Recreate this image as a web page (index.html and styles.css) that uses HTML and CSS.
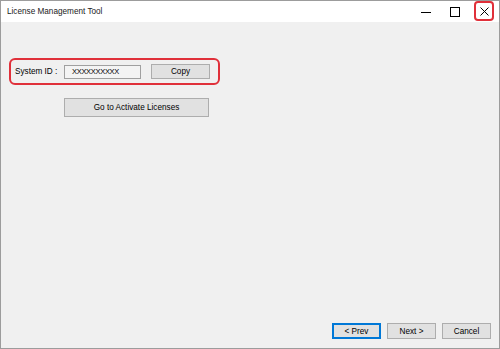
FILE: index.html
```html
<!DOCTYPE html>
<html lang="en">
<head>
    <meta charset="UTF-8">
    <title>License Management Tool</title>
    <link rel="stylesheet" href="styles.css">
</head>
<body>
    <div class="window">
        <div class="titlebar">
            <span class="title">License Management Tool</span>
            <div class="controls">
                <span class="ctl"><svg width="10" height="10" viewBox="0 0 10 10"><path d="M0 5.5h10" stroke="#000" stroke-width="1"/></svg></span>
                <span class="ctl"><svg width="10" height="10" viewBox="0 0 10 10"><rect x="0.5" y="0.5" width="9" height="9" fill="none" stroke="#000" stroke-width="1"/></svg></span>
                <span class="ctl close"><svg width="9" height="9" viewBox="0 0 9 9"><path d="M0.5 0.5L8.5 8.5M8.5 0.5L0.5 8.5" stroke="#000" stroke-width="1"/></svg></span>
            </div>
        </div>

        <div class="content">
            <div class="id-row">
                <span class="label">System ID :</span>
                <span class="idbox">XXXXXXXXXX</span>
                <button class="btn copy">Copy</button>
            </div>

            <button class="btn activate">Go to Activate Licenses</button>

            <div class="footer">
                <button class="btn nav default">&lt; Prev</button>
                <button class="btn nav">Next &gt;</button>
                <button class="btn nav">Cancel</button>
            </div>
        </div>
    </div>
</body>
</html>
```

FILE: styles.css
```css
html, body { margin: 0; padding: 0; }
body { font-family: "Liberation Sans", Arial, sans-serif; font-size: 8.2px; color: #000; }

.window { width: 500px; height: 349px; box-sizing: border-box; border: 1px solid #9c9c9c; display: flex; flex-direction: column; }
.titlebar { height: 21px; flex: none; background: #fff; display: flex; align-items: center; padding-left: 6px; }
.title { flex: 1; font-size: 8.2px; color: #1a1a1a; }
.controls { display: flex; height: 100%; margin-right: 1px; }
.ctl { width: 29px; display: flex; align-items: center; justify-content: center; }
.ctl.close { box-sizing: border-box; width: 20px; height: 20px; margin: 0 4px 0 5px; border: 2px solid #e0303a; border-radius: 4px; }

.content { flex: 1; background: #f0f0f0; display: flex; flex-direction: column; align-items: flex-start; }

.id-row { margin: 36px 0 0 8px; box-sizing: border-box; width: 211px; height: 27px; border: 2px solid #e0303a; border-radius: 6px; display: flex; align-items: center; padding-left: 4px; }
.label { width: 49px; }
.idbox { box-sizing: border-box; width: 77px; height: 14px; border: 1px solid #a0a0a0; background: #f4f4f4; padding-left: 7px; line-height: 12px; font-size: 7.5px; letter-spacing: -0.3px; }

.btn { font-family: inherit; font-size: 8.2px; color: #000; background: #e1e1e1; border: 1px solid #adadad; padding: 0; box-sizing: border-box; }
.copy { width: 59px; height: 15px; margin-left: 10px; }
.activate { width: 145px; height: 19px; margin: 13px 0 0 63px; }

.footer { margin-top: auto; align-self: stretch; display: flex; justify-content: flex-end; gap: 6px; padding: 0 8px 9px 0; }
.nav { width: 49px; height: 16px; }
.nav.default { border: 2px solid #0078d7; }
```
